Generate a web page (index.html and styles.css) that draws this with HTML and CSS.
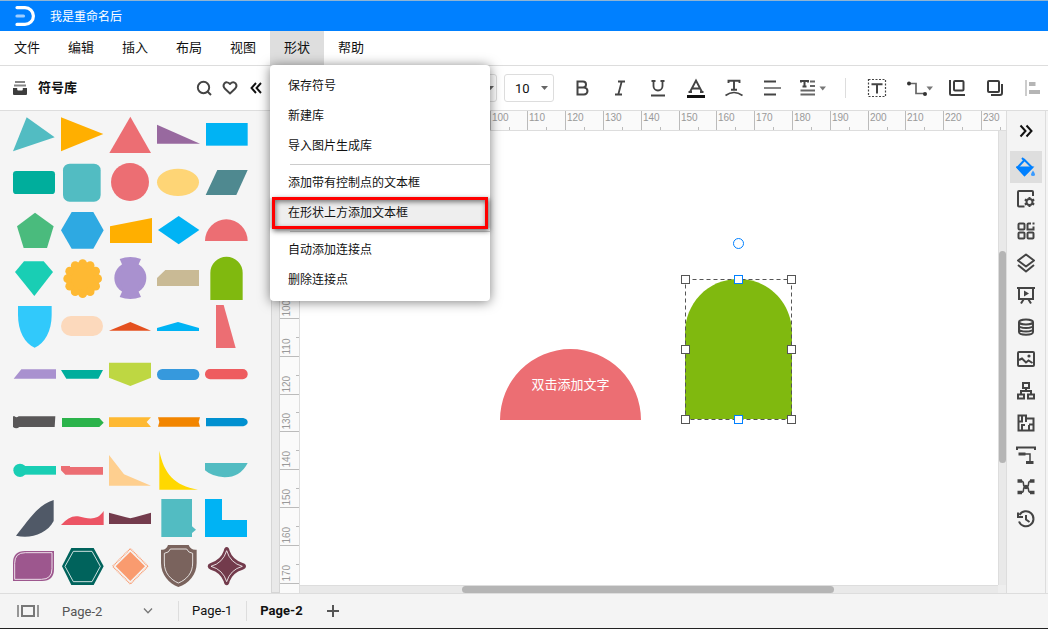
FILE: index.html
```html
<!DOCTYPE html>
<html lang="zh-CN">
<head>
<meta charset="utf-8">
<title>我是重命名后</title>
<link rel="stylesheet" href="styles.css">
</head>
<body>
<div class="app">
  <header class="titlebar">
    <svg class="logo" width="20" height="20" viewBox="0 0 20 20" fill="none" stroke-linecap="round"><path d="M2 1.600H10a8.400 8.400 0 0 1 0 16.800H2" stroke="#fff" stroke-width="3.200"/><path d="M2 10H8.500" stroke="#9fceff" stroke-width="3.200"/></svg>
    <span>我是重命名后</span>
  </header>

  <nav class="menubar">
    <button class="menu-btn">文件</button>
    <button class="menu-btn">编辑</button>
    <button class="menu-btn">插入</button>
    <button class="menu-btn">布局</button>
    <button class="menu-btn">视图</button>
    <div class="menu-host">
      <button class="menu-btn is-open" aria-expanded="true">形状</button>
      <div class="dropdown">
        <button class="drop-item">保存符号</button>
        <button class="drop-item">新建库</button>
        <button class="drop-item">导入图片生成库</button>
        <hr class="drop-sep">
        <button class="drop-item">添加带有控制点的文本框</button>
        <button class="drop-item is-marked">在形状上方添加文本框</button>
        <hr class="drop-sep">
        <button class="drop-item">自动添加连接点</button>
        <button class="drop-item">删除连接点</button>
      </div>
    </div>
    <button class="menu-btn">帮助</button>
  </nav>

  <div class="toolrow">
    <div class="library-head">
      <svg width="16" height="16" viewBox="0 0 16 16"><path d="M3 2H13M2 5.500H14" stroke="#858585" stroke-width="2"/><path d="M1 8H5.200V9.500Q5.200 10.500 6.200 10.500H9.800Q10.800 10.500 10.800 9.500V8H15V14Q15 15 14 15H2Q1 15 1 14Z" fill="#3d3d3d"/></svg>
      <h2>符号库</h2>
      <button class="mini" aria-label="搜索"><svg width="18" height="18" viewBox="0 0 18 18" fill="none" stroke="#444" stroke-width="1.900"><circle cx="8.500" cy="8.500" r="5.700"/><path d="M12.500 12.500L16 16"/></svg></button>
      <button class="mini" aria-label="收藏"><svg width="18" height="18" viewBox="0 0 18 18" fill="none" stroke="#444" stroke-width="1.900" stroke-linejoin="round"><path d="M9 14.500L4 9.800Q1.400 7 3.300 4.500Q5.900 1.900 9 5Q12.100 1.900 14.700 4.500Q16.600 7 14 9.800Z"/></svg></button>
      <button class="mini" aria-label="收起"><svg width="18" height="18" viewBox="0 0 18 18" fill="none" stroke="#111" stroke-width="1.900"><path d="M9 4L4.500 9L9 14M14 4L9.500 9L14 14"/></svg></button>
    </div>
    <div class="toolbar">
      <div class="select select-font"><select aria-label="字体"><option label=" "></option></select><svg width="8" height="5" viewBox="0 0 8 5"><path d="M0 0H7L3.500 4Z" fill="#666"/></svg></div>
      <div class="select select-size"><select aria-label="字号"><option>10</option></select><svg width="8" height="5" viewBox="0 0 8 5"><path d="M0 0H7L3.500 4Z" fill="#666"/></svg></div>
      <button class="tool" aria-label="粗体"><svg width="22" height="22" viewBox="0 0 22 22" fill="none" stroke="#444" stroke-width="2"><path d="M6.500 4.500H12A3 3 0 0 1 12 10.500H6.500ZM6.500 10.500H13A3.500 3.500 0 0 1 13 17.500H6.500Z"/></svg></button>
      <button class="tool" aria-label="斜体"><svg width="22" height="22" viewBox="0 0 22 22" fill="none" stroke="#444" stroke-width="1.800"><path d="M9 4.500H16M6 17.500H13M12.700 4.500L9.300 17.500"/></svg></button>
      <button class="tool" aria-label="下划线"><svg width="22" height="22" viewBox="0 0 22 22" fill="none" stroke="#444" stroke-width="1.800"><path d="M6.500 3.500V9A4.500 4.500 0 0 0 15.500 9V3.500M4.500 4H8.500M13.500 4H17.500M4 18.500H18"/></svg></button>
      <button class="tool" aria-label="字体颜色"><svg width="22" height="22" viewBox="0 0 22 22" fill="none"><path d="M5 15L11 3.500L17 15M7.500 11.500H14.500M3.500 15H7M15 15H18.500" stroke="#444" stroke-width="1.900"/><path d="M2 19.500H20" stroke="#111" stroke-width="3"/></svg></button>
      <button class="tool" aria-label="弯曲文字"><svg width="22" height="22" viewBox="0 0 22 22" fill="none" stroke="#444" stroke-width="1.900"><path d="M5.500 6V3.700H16.500V6M11 3.500V12.500M8 12.700H14"/><path d="M2.500 18.500Q11 12.500 19.500 18.500" stroke-width="1.600"/></svg></button>
      <button class="tool" aria-label="对齐"><svg width="22" height="22" viewBox="0 0 22 22" stroke="#444" stroke-width="1.800"><path d="M3 4.500H15M3 17.500H15"/><path d="M3 11H20" stroke="#777"/></svg></button>
      <button class="tool tool-wide" aria-label="行距"><svg width="32" height="22" viewBox="0 0 32 22" fill="none" stroke="#444" stroke-width="2"><path d="M5 5.500V4H12V5.500M8.500 4V9.500M6.500 9.500H10.500"/><path d="M14 4.500H19M14 9H19M4.500 13.500H19M4.500 17.500H19" stroke="#666"/><path d="M23.500 9.500H30L26.700 13.500Z" fill="#777" stroke="none"/></svg></button>
      <span class="divider"></span>
      <button class="tool" aria-label="文本框"><svg width="22" height="22" viewBox="0 0 22 22" fill="none" stroke="#444"><path d="M2.500 2.500H19.500V19.500H2.500Z" stroke-width="1.200" stroke-dasharray="2 1.500"/><path d="M5.500 7.300H16.500M11 7.300V16.500" stroke-width="2"/></svg></button>
      <button class="tool tool-wide" aria-label="连接线"><svg width="32" height="22" viewBox="0 0 32 22" fill="none" stroke="#666" stroke-width="1.700"><path d="M8 6.500H15V16.500H23"/><g fill="#333" stroke="none"><circle cx="8" cy="6.500" r="2"/><circle cx="24" cy="17" r="2"/><path d="M25.500 9.500H32L28.700 13.500Z" fill="#777"/></g></svg></button>
      <button class="tool" aria-label="裁剪"><svg width="22" height="22" viewBox="0 0 22 22" fill="none" stroke="#3d3d3d" stroke-width="2"><rect x="8" y="4" width="9.500" height="9.500" rx="1"/><path d="M4 3V16.500Q4 18 5.500 18H19"/></svg></button>
      <button class="tool" aria-label="图层"><svg width="22" height="22" viewBox="0 0 22 22" fill="none" stroke="#3d3d3d" stroke-width="2"><rect x="4" y="4" width="11" height="11" rx="1"/><path d="M18 7V16Q18 18 16 18H7"/></svg></button>
      <button class="tool" aria-label="左对齐"><svg width="22" height="22" viewBox="0 0 22 22"><path d="M4 3V19" stroke="#ccc" stroke-width="2"/><path d="M7 5H13.500V9H7ZM7 13H18V17H7Z" fill="#b5b5b5"/></svg></button>
    </div>
  </div>

  <main class="work">
    <aside class="library" aria-label="符号库"></aside>
    <div class="gutter"></div>
    <div class="ruler ruler-y"></div>
    <section class="stage">
      <div class="ruler ruler-x"></div>
      <div class="stage-body">
        <div class="canvas">
          <svg class="node node-dome" width="141" height="71" viewBox="0 0 141 71"><path d="M0 71A70.500 71 0 0 1 141 71Z" fill="#ec6e73"/></svg>
          <span class="node node-label">双击添加文字</span>
          <svg class="node node-arch" width="117" height="189" viewBox="0 0 117 189">
            <path d="M5 183V97C5 68 27 43 58.500 43S112 68 112 97V183Z" fill="#80b90f"/>
            <rect x="5.500" y="43.500" width="106" height="140" fill="none" stroke="#555" stroke-dasharray="4 3"/>
            <g fill="#fff" stroke="#555"><rect x="1.500" y="39.500" width="8" height="8"/><rect x="107.500" y="39.500" width="8" height="8"/><rect x="1.500" y="109.500" width="8" height="8"/><rect x="107.500" y="109.500" width="8" height="8"/><rect x="1.500" y="179.500" width="8" height="8"/><rect x="107.500" y="179.500" width="8" height="8"/></g>
            <g fill="#fff" stroke="#0080ff"><rect x="54.500" y="39.500" width="8" height="8"/><rect x="54.500" y="179.500" width="8" height="8"/><circle cx="58.500" cy="7.500" r="5"/></g>
          </svg>
        </div>
        <div class="track track-y"><i class="thumb"></i></div>
        <div class="track track-x"><i class="thumb"></i></div>
        <div class="track-corner"></div>
      </div>
    </section>
    <aside class="dock">
      <button class="dock-btn dock-toggle" aria-label="收起面板"><svg viewBox="0 0 20 20" stroke="#111"><path d="M4.500 4.500L9.500 10L4.500 15.500M10.500 4.500L15.500 10L10.500 15.500"/></svg></button>
      <button class="dock-btn is-active" aria-label="填充"><svg viewBox="0 0 20 20" stroke="#0080ff"><path d="M6 1L9 4M8.500 3L16 10.500L8.500 18L1.500 10.500Z"/><path d="M1.500 10.500H16L8.500 18Z" fill="#0080ff"/><path d="M17 13.500Q21 19 17 19T17 13.500Z" fill="#3a9bff" stroke="none"/></svg></button>
      <button class="dock-btn" aria-label="页面设置"><svg viewBox="0 0 20 20"><path d="M8.500 17.500H3Q2 17.500 2 16.500V3Q2 2 3 2H16Q17 2 17 3V7"/><circle cx="13.500" cy="13" r="3"/><path d="M13.500 8V10M13.500 16V18M8.800 10.500L10.700 11.500M16.300 14.500L18.200 15.500M8.800 15.500L10.700 14.500M16.300 11.500L18.200 10.500"/></svg></button>
      <button class="dock-btn" aria-label="组件"><svg viewBox="0 0 20 20"><rect x="2.500" y="2.500" width="6" height="6" rx="1"/><rect x="2.500" y="11.500" width="6" height="6" rx="1"/><rect x="11.500" y="11.500" width="6" height="6" rx="1"/><path d="M15 2.500H12.500Q11.500 2.500 11.500 3.500V8.500H17.500V5.500M16.500 2.500H18.500"/></svg></button>
      <button class="dock-btn" aria-label="图层"><svg viewBox="0 0 20 20" stroke-linejoin="round"><path d="M10 1.500L18 7.500L10 13.500L2 7.500ZM2 12L10 18.500L18 12"/></svg></button>
      <button class="dock-btn" aria-label="演示"><svg viewBox="0 0 20 20"><path d="M1 3H19M3 3V14H17V3M7.500 14.500L5 18.500M12.500 14.500L15 18.500"/><path d="M8 5.500L13 8.500L8 11.500Z" fill="#444" stroke="none"/></svg></button>
      <button class="dock-btn" aria-label="数据"><svg viewBox="0 0 20 20"><ellipse cx="10" cy="5" rx="7" ry="2.500"/><path d="M3 5V15C3 18.500 17 18.500 17 15V5M3 8.500C3 11.800 17 11.800 17 8.500M3 12C3 15.300 17 15.300 17 12"/></svg></button>
      <button class="dock-btn" aria-label="图片"><svg viewBox="0 0 20 20"><rect x="2" y="3" width="16" height="14" rx="1"/><path d="M3 11L6 9.500L10 13.500L12.500 11.500L16.500 14"/><circle cx="13" cy="7" r="1.600" fill="#444" stroke="none"/></svg></button>
      <button class="dock-btn" aria-label="组织结构"><svg viewBox="0 0 20 20"><rect x="7" y="2" width="6" height="5"/><rect x="2" y="13.500" width="6" height="4"/><rect x="12" y="13.500" width="6" height="4"/><path d="M10 7V10M5 13V10H15V13"/></svg></button>
      <button class="dock-btn" aria-label="平面图"><svg viewBox="0 0 20 20"><path d="M2.500 2.500H10V5.500H17.500V17.500H2.500ZM6 2.500V8M2.500 8.500H7M10 5.500V9M6 17V12H9M13 17V12M13 11.500H17"/></svg></button>
      <button class="dock-btn" aria-label="时间线"><svg viewBox="0 0 20 20"><path d="M1 5V2.500H19V5"/><path d="M2.500 9H9.500M10 17.500H17.500" stroke-width="3"/><path d="M9 9H14V17" stroke-width="1.500"/></svg></button>
      <button class="dock-btn" aria-label="思维导图"><svg viewBox="0 0 20 20"><path d="M1.500 4H6M1.500 15.500H6M14 4H18.500M14 15.500H18.500" stroke-width="3.500"/><path d="M5 4Q7.500 4 7.500 7T10 10Q12.500 10 12.500 7T15 4M5 15.500Q7.500 15.500 7.500 12.700T10 10Q12.500 10 12.500 12.700T15 15.500" stroke-width="1.500"/><circle cx="10" cy="10" r="2.300" fill="#444" stroke="none"/></svg></button>
      <button class="dock-btn" aria-label="历史"><svg viewBox="0 0 20 20"><path d="M3.500 6A7.500 7.500 0 1 1 3 12.500M10 6V10.500L13.500 13"/><path d="M2 3.500V8H7"/></svg></button>
    </aside>
  </main>

  <footer class="statusbar">
    <button class="view-btn" aria-label="页面视图"><svg width="24" height="16" viewBox="0 0 24 16" fill="none" stroke="#777"><rect x="6" y="3" width="12" height="10" stroke-width="2"/><path d="M2 2V14M22 2V14" stroke-width="1.500"/></svg></button>
    <div class="page-select"><select aria-label="页面"><option>Page-2</option></select><svg width="10" height="6" viewBox="0 0 10 6" fill="none" stroke="#777" stroke-width="1.300"><path d="M1 0.500L5 4.800L9 0.500"/></svg></div>
    <button class="tab">Page-1</button>
    <button class="tab is-current">Page-2</button>
    <button class="add-btn" aria-label="新增页面"><svg width="14" height="14" viewBox="0 0 14 14"><path d="M1 7H13M7 1V13" stroke="#555" stroke-width="2"/></svg></button>
  </footer>
</div>
<script src="app.js"></script>
</body>
</html>
```

FILE: styles.css
```css
* { box-sizing: border-box; }

body {
  margin: 0;
  font-family: Roboto, "Noto Sans CJK SC", sans-serif;
  font-size: 13px;
  color: #111;
  background: #f4f4f4;
}

button, select {
  margin: 0;
  padding: 0;
  border: 0;
  background: none;
  font: inherit;
  color: inherit;
}

svg { display: block; flex: none; }

.app {
  display: flex;
  flex-direction: column;
  height: 100vh;
  overflow: hidden;
  border-bottom: 1px solid #222;
}

.titlebar {
  display: flex;
  align-items: center;
  gap: 15px;
  flex: none;
  height: 31px;
  padding-left: 15px;
  border-top: 1px solid #8fb4d4;
  background: #0080ff;
  color: #fff;
  font-size: 12px;
}

.titlebar span { padding-bottom: 2px; }

.menubar {
  display: flex;
  flex: none;
  height: 35px;
  border-bottom: 1px solid #ddd;
  background: #fff;
}

.menu-btn {
  width: 54px;
  height: 34px;
  padding-bottom: 3px;
}

.menu-btn.is-open { background: #dedede; }

.menu-host { position: relative; }

.dropdown {
  position: absolute;
  top: 100%;
  left: 0;
  z-index: 10;
  width: 220px;
  padding: 6px 0;
  border-radius: 4px;
  background: #fff;
  box-shadow: 0 1px 12px rgba(0, 0, 0, 0.5);
}

.drop-item {
  position: relative;
  display: block;
  width: 100%;
  height: 30px;
  padding: 0 0 3px 18px;
  font-size: 12px;
  text-align: left;
}

.drop-item.is-marked { background: #eee; }

.drop-item.is-marked::after {
  content: "";
  position: absolute;
  inset: -1px 2px;
  border: 3px solid #f00;
  box-shadow: 1px 2px 5px rgba(0, 0, 0, 0.6), inset 1px 2px 5px rgba(0, 0, 0, 0.5);
}

.drop-sep {
  height: 1px;
  margin: 3px 0 3px 20px;
  border: 0;
  background: #ccc;
}

.toolrow {
  display: flex;
  flex: none;
  height: 45px;
  border-bottom: 1px solid #ddd;
  background: #fff;
}

.library-head {
  display: flex;
  align-items: center;
  flex: none;
  width: 271px;
  padding: 0 2px 0 12px;
}

.library-head h2 {
  flex: 1;
  margin: 0 0 0 10px;
  padding-bottom: 3px;
  font-size: 13px;
  font-weight: 700;
}

.mini {
  display: grid;
  place-items: center;
  width: 26px;
  height: 26px;
}

.toolbar {
  display: flex;
  align-items: center;
  flex: 1;
  min-width: 0;
  overflow: hidden;
  padding-left: 19px;
}

.select {
  display: grid;
  flex: none;
  align-items: center;
  height: 28px;
  margin-right: 7px;
  border: 1px solid #ddd;
  border-radius: 3px;
}

.select > * { grid-area: 1 / 1; }

.select select {
  width: 100%;
  height: 100%;
  padding-left: 10px;
  appearance: none;
}

.select svg {
  justify-self: end;
  margin-right: 4px;
  pointer-events: none;
}

.select-font { width: 207px; }
.select-font svg { margin-right: 1px; }
.select-size { width: 50px; margin-right: 9px; }

.tool {
  display: grid;
  flex: none;
  place-items: center;
  width: 38px;
  height: 30px;
}

.tool-wide { width: 42px; }

.divider {
  flex: none;
  width: 1px;
  height: 20px;
  margin: 0 12px;
  background: #ddd;
}

.work {
  display: flex;
  flex: 1;
  min-height: 0;
}

.library {
  display: grid;
  grid-template-columns: repeat(5, 48px);
  grid-auto-rows: 48px;
  flex: none;
  width: 271px;
  padding-left: 10px;
  overflow: hidden;
  background: #f5f5f5;
}

.library button { width: 48px; height: 48px; }

.gutter {
  flex: none;
  width: 9px;
  border: solid #d5d5d5;
  border-width: 0 1px 1px;
  background: #e9e9e9;
}

.ruler {
  flex: none;
  overflow: hidden;
  background: #fafafa;
}

.ruler text {
  font-family: "Liberation Sans", sans-serif;
  font-size: 10px;
  fill: #999;
}

.ruler line { stroke: #bbb; }

.ruler-x {
  height: 20px;
  border-bottom: 1px solid #ddd;
}

.ruler-y {
  width: 20px;
  padding-top: 20px;
  border-right: 1px solid #ddd;
}

.stage {
  display: flex;
  flex-direction: column;
  flex: 1;
  min-width: 0;
}

.stage-body {
  display: grid;
  grid-template: minmax(0, 1fr) 8px / minmax(0, 1fr) 8px;
  flex: 1;
  min-height: 0;
}

.canvas {
  position: relative;
  overflow: hidden;
  background: #fff;
}

.node { position: absolute; }
.node-dome { left: 200px; top: 218px; }

.node-label {
  left: 200px;
  top: 244px;
  width: 141px;
  line-height: 20px;
  text-align: center;
  color: #fff;
}

.node-arch { left: 380px; top: 105px; }

.track {
  display: grid;
  background: #e9e9e9;
}

.track-x {
  grid-template-columns: 162fr 372fr 164fr;
  border-top: 1px solid #ddd;
}

.track-y {
  grid-template-rows: 120fr 212fr 122fr;
  border-left: 1px solid #ddd;
}

.thumb {
  border-radius: 4px;
  background: #b5b5b5;
}

.track-x .thumb { grid-column: 2; }
.track-y .thumb { grid-row: 2; }
.track-corner { background: #eee; }

.dock {
  display: flex;
  flex-direction: column;
  align-items: center;
  flex: none;
  width: 40px;
  margin-right: 2px;
  padding-top: 4px;
  overflow: hidden;
  border: solid #ddd;
  border-width: 0 1px;
  background: #f4f4f4;
}

.dock-btn {
  display: grid;
  flex: none;
  place-items: center;
  width: 32px;
  height: 32px;
}

.dock-toggle { margin-bottom: 4px; }
.dock-btn.is-active { background: #dedede; }

.dock-btn svg {
  width: 20px;
  height: 20px;
  fill: none;
  stroke-width: 2;
}

.dock-btn svg:not([stroke]) { stroke: #444; }

.statusbar {
  display: flex;
  align-items: center;
  flex: none;
  height: 35px;
  padding-left: 16px;
  border-top: 1px solid #ddd;
}

.page-select {
  display: grid;
  align-items: center;
  width: 113px;
  margin-left: 22px;
  color: #555;
}

.page-select > * { grid-area: 1 / 1; }
.page-select select { width: 100%; height: 24px; appearance: none; }
.page-select svg { justify-self: end; margin-right: 22px; pointer-events: none; }

.tab {
  height: 20px;
  padding: 0 14px 2px 13px;
  border-left: 1px solid #ddd;
}

.tab.is-current { font-weight: 700; }

.page-select + .tab { margin-left: 3px; }
.add-btn { margin-left: 9px; }
```

FILE: app.js
```javascript
const poly = (points, fill) => `<polygon points="${points}" fill="${fill}"/>`;
const path = (d, fill) => `<path d="${d}" fill="${fill}"/>`;
const rect = (x, y, w, h, r, fill) => `<rect x="${x}" y="${y}" width="${w}" height="${h}" rx="${r}" fill="${fill}"/>`;
const ring = d => `<path d="${d}" fill="none" stroke="#fff" stroke-width="3" stroke-opacity=".8"/>`;

// Scalloped disc: twelve small circles round a large one
let petals = '<circle cx="74" cy="71" r="50"/>';
for (let i = 0; i < 12; i++) {
  const a = i * Math.PI / 6;
  petals += `<circle cx="${74 + 45 * Math.cos(a)}" cy="${71 + 45 * Math.sin(a)}" r="13"/>`;
}

// Each symbol is drawn on a 144 x 144 grid
const symbols = [
  poly('50,19 134,79 9,121', '#52bcc2'),
  poly('9,19 136,69 9,121', '#ffaf00'),
  poly('73,17 135,126 10,126', '#ec6e73'),
  poly('9,41 138,98 9,98', '#98699f'),
  rect(12, 36, 125, 68, 0, '#00b3f4'),

  rect(9, 36, 126, 69, 10, '#00ae9c'),
  rect(15, 14, 113, 114, 20, '#52bcc2'),
  '<circle cx="72" cy="69" r="57" fill="#ec6e73"/>',
  '<ellipse cx="72" cy="70" rx="63" ry="41" fill="#fed576"/>',
  poly('46,33 137,33 103,108 11,108', '#4f8990'),

  poly('75,17 131,58 111,123 41,123 21,58', '#4abb7d'),
  poly('9,70 41,15 106,15 137,70 106,125 41,125', '#2ea9e2'),
  poly('12,58 138,33 138,108 12,108', '#ffaf00'),
  poly('74,27 136,69 74,112 12,69', '#00b3f4'),
  path('M9 102A64 65 0 0 1 137 102Z', '#ec6e73'),

  poly('15,51 42,19 101,19 129,51 73,123', '#19ceb4'),
  `<g fill="#feb933">${petals}</g>`,
  '<circle cx="73" cy="69" r="48" fill="#a991cf"/>' + path('M41 12Q73 0 105 12L96 32L100 50H46L50 32ZM41 126Q73 138 105 126L96 106L100 88H46L50 106Z', '#a991cf'),
  poly('9,69 34,45 135,45 135,93 9,93', '#c9ba95'),
  path('M25 135V54A48 48 0 0 1 122 54V135Z', '#80b90f'),

  path('M24 9H125V35C125 85 104 120 74 134C44 120 24 85 24 35Z', '#31c9fb'),
  rect(9, 39, 126, 60, 30, '#fcd9bc'),
  poly('9,83 73,57 135,83', '#e4501f'),
  poly('9,75 72,57 135,75 135,84 9,84', '#00b3f4'),
  poly('42,6 65,6 101,135 42,135', '#ec6e73'),

  poly('11,83 34,55 138,55 138,83', '#a991cf'),
  poly('9,57 135,57 121,83 25,83', '#00ae9c'),
  poly('9,35 135,35 135,80 73,105 9,80', '#bed742'),
  rect(9, 54, 127, 33, 16, '#3699dd'),
  rect(9, 54, 128, 31, 15, '#ee5c5f'),

  path('M9 52H14Q19 58 26 52H136L134 84H28Q19 92 9 84Z', '#595758'),
  poly('12,57 124,57 137,71 124,84 12,84', '#2bb34b'),
  poly('9,55 135,55 122,69 135,84 9,84', '#feb933'),
  poly('12,55 138,55 134,69 138,83 12,83 16,69', '#f28500'),
  path('M12 57H124Q137 60 137 69T124 82H12Z', '#0090d0'),

  '<circle cx="30" cy="70" r="20" fill="#19ceb4"/>' + rect(30, 57, 108, 26, 0, '#19ceb4'),
  poly('9,57 36,57 36,60 135,60 135,83 22,83 9,70', '#ec6e73'),
  poly('9,24 54,82 135,116 9,116', '#fecf8f'),
  path('M16 11C30 80 60 115 132 128H16Z', '#ffd800'),
  path('M9 48H137Q115 91 68 91Q30 89 9 70Z', '#52bcc2'),

  path('M18 122C50 85 80 30 131 15V78C110 118 60 132 18 122Z', '#505967'),
  path('M9 90Q35 60 60 64C90 70 115 80 137 48V90Z', '#ec5464'),
  path('M9 53L60 67Q73 72 86 67L135 53V87H9Z', '#733b4c'),
  poly('22,12 114,12 114,94 126,104 114,114 114,126 22,126', '#52bcc2'),
  poly('9,12 60,12 60,75 135,75 135,126 9,126', '#00b3f4'),

  path('M9 114V60Q9 24 45 24H132V78Q132 114 96 114Z', '#9d578e') + ring('M14 109V61Q14 29 46 29H126V77Q126 109 94 109Z'),
  poly('12,70 40,15 107,15 137,70 107,126 40,126', '#00635c') + ring('M21 70L46 25H102L127 70L102 116H46Z'),
  poly('73,26 117,70 73,114 29,70', '#f99b6f') + '<path d="M73 17L126 70L73 123L20 70Z" fill="none" stroke="#f99b6f" stroke-width="4" stroke-dasharray="3 2"/>',
  path('M42 6H104Q110 22 128 20V60C128 95 105 122 73 132C45 122 21 95 21 60V20Q37 22 42 6Z', '#7a635d') + ring('M49 18H98Q102 29 116 31V60C116 90 98 110 73 120C50 110 31 90 31 60V31Q46 29 49 18Z'),
  path('M74 12Q81 12 83 24Q92 50 122 60Q132 63 132 70T122 80Q92 89 83 115Q81 127 74 127T65 115Q56 89 26 80Q17 77 17 70T26 60Q56 50 65 24Q67 12 74 12Z', '#733b4c') + ring('M74 23Q85 60 121 70Q85 80 74 116Q63 80 27 70Q63 60 74 23Z')
];

document.querySelector('.library').innerHTML = symbols
  .map((s, i) => `<button aria-label="符号 ${i + 1}"><svg width="48" height="48" viewBox="0 0 144 144">${s}</svg></button>`)
  .join('');

// Ruler scale: 96 dpi, millimetres
const PX_PER_MM = 3.78;

let scaleX = '';
for (let mm = 50; mm <= 230; mm += 10) {
  const x = Math.floor(1 + (mm - 50) * PX_PER_MM) + 0.5;
  const mid = Math.floor(x + 5 * PX_PER_MM) + 0.5;
  scaleX += `<line x1="${x}" x2="${x}" y1="0" y2="19"/><line x1="${mid}" x2="${mid}" y1="16" y2="19"/><text x="${x + 1.5}" y="10">${mm}</text>`;
}
document.querySelector('.ruler-x').innerHTML = `<svg width="706" height="19">${scaleX}</svg>`;

let scaleY = '';
for (let mm = 60; mm <= 170; mm += 10) {
  const y = Math.floor(187.4 + (mm - 100) * PX_PER_MM) + 0.5;
  const mid = Math.floor(y - 5 * PX_PER_MM) + 0.5;
  scaleY += `<line x1="0" x2="19" y1="${y}" y2="${y}"/><line x1="16" x2="19" y1="${mid}" y2="${mid}"/><text transform="translate(10 ${y - 2}) rotate(-90)">${mm}</text>`;
}
document.querySelector('.ruler-y').innerHTML = `<svg width="19" height="462">${scaleY}</svg>`;
```
